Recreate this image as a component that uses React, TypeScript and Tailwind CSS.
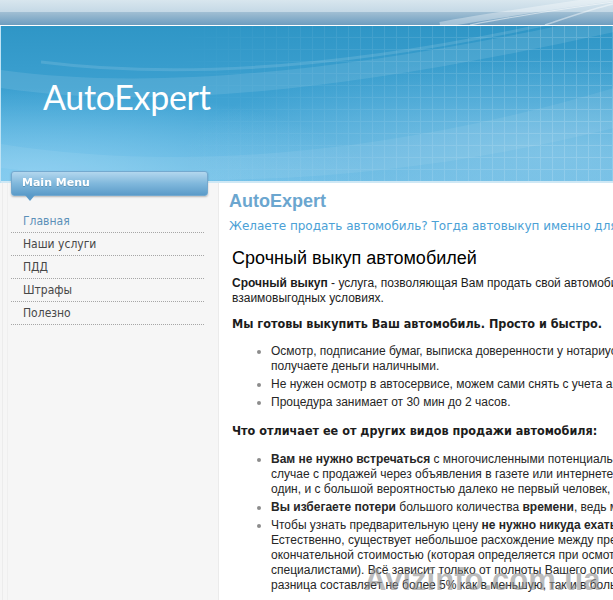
import React from "react";

const menu = ["Главная", "Наши услуги", "ПДД", "Штрафы", "Полезно"];

function Bullet({ lines }: { lines: React.ReactNode[] }) {
  return (
    <li className="relative mb-[3px]">
      <span className="absolute left-[-14px] top-[6px] w-[4px] h-[4px] rounded-full bg-[#8c8c8c]" />
      {lines.map((l, i) => (
        <div key={i} className="whitespace-nowrap">
          {l}
        </div>
      ))}
    </li>
  );
}

export default function App() {
  return (
    <div className="relative w-[613px] h-[600px] overflow-hidden bg-white flex flex-col font-['Liberation_Sans',Arial,sans-serif]">
      {/* top bar */}
      <div className="relative h-[25px] shrink-0">
        <svg className="absolute inset-0" width="613" height="25" viewBox="0 0 613 25">
          <defs>
            <linearGradient id="tb" x1="0" y1="0" x2="0" y2="1">
              <stop offset="0" stopColor="#d8e6ee" />
              <stop offset="0.46" stopColor="#c5d9e6" />
              <stop offset="0.5" stopColor="#9fbed3" />
              <stop offset="1" stopColor="#6e9dbf" />
            </linearGradient>
          </defs>
          <rect width="613" height="25" fill="url(#tb)" />
          <path d="M440 25 C 500 14, 560 6, 613 -2" stroke="#ffffff" strokeOpacity="0.35" strokeWidth="6" fill="none" />
          <path d="M470 25 C 520 15, 570 8, 613 2" stroke="#ffffff" strokeOpacity="0.5" strokeWidth="1.2" fill="none" />
          <path d="M545 25 C 575 15, 595 8, 613 4" stroke="#ffffff" strokeOpacity="0.45" strokeWidth="1.5" fill="none" />
        </svg>
      </div>
      <div className="h-[1px] shrink-0 bg-white" />
      {/* header */}
      <header className="relative h-[157px] shrink-0 border-l border-[#bfe3f5]">
        <svg className="absolute inset-0" width="613" height="157" viewBox="0 0 613 157">
          <defs>
            <linearGradient id="hg" x1="0" y1="0" x2="0" y2="1">
              <stop offset="0" stopColor="#2f96c6" />
              <stop offset="0.5" stopColor="#40a3d3" />
              <stop offset="1" stopColor="#66b9e3" />
            </linearGradient>
            <radialGradient id="hl" cx="0.05" cy="0.95" r="0.55">
              <stop offset="0" stopColor="#96d6f6" stopOpacity="0.7" />
              <stop offset="1" stopColor="#96d6f6" stopOpacity="0" />
            </radialGradient>
            <radialGradient id="hr" cx="0.9" cy="0.8" r="0.6">
              <stop offset="0" stopColor="#9fd3ee" stopOpacity="0.55" />
              <stop offset="1" stopColor="#9fd3ee" stopOpacity="0" />
            </radialGradient>
            <pattern id="grid" width="12" height="12" patternUnits="userSpaceOnUse">
              <path d="M11.5 0V12M0 11.5H12" stroke="#ffffff" strokeWidth="1" fill="none" />
            </pattern>
            <linearGradient id="gm" x1="0" x2="1" y1="0" y2="0">
              <stop offset="0.28" stopColor="#fff" stopOpacity="0" />
              <stop offset="0.75" stopColor="#fff" stopOpacity="0.7" />
              <stop offset="1" stopColor="#fff" stopOpacity="1" />
            </linearGradient>
            <mask id="gmask">
              <rect width="613" height="157" fill="url(#gm)" />
            </mask>
          </defs>
          <rect width="613" height="157" fill="url(#hg)" />
          <rect width="613" height="157" fill="url(#hl)" />
          <rect width="613" height="157" fill="url(#hr)" />
          <path d="M0 44 C 160 66, 360 44, 613 -12 L613 6 C 360 62, 160 86, 0 62 Z" fill="#ffffff" fillOpacity="0.1" />
          <path d="M40 36 C 200 56, 380 36, 560 -5" stroke="#ffffff" strokeOpacity="0.12" strokeWidth="3" fill="none" />
          <path d="M0 118 C 200 150, 420 120, 613 62 L613 102 C 420 150, 220 168, 0 142 Z" fill="#ffffff" fillOpacity="0.07" />
          <rect width="613" height="157" fill="url(#grid)" mask="url(#gmask)" opacity="0.17" />
        </svg>
        <div className="relative pl-[42px] pt-[50px] text-white text-[34px] leading-[42px] font-['Lato',sans-serif] tracking-[-0.3px]">
          AutoExpert
        </div>
        <div className="absolute left-0 right-0 bottom-0 h-[2px] bg-[#cfe8f5]" />
      </header>
      {/* body */}
      <div className="flex flex-1 min-h-0">
        <aside className="relative w-[219px] shrink-0 bg-[#f6f6f6] border-r border-[#ebebeb]">
          <div className="absolute left-[2px] top-0 bottom-0 w-[1px] bg-[#ececec]" />
          <div className="absolute left-[7px] top-0 bottom-0 w-[1px] bg-[#efefef]" />
          <div className="relative z-10 -mt-[12px] ml-[11px] w-[197px] h-[25px] rounded-[3px] bg-gradient-to-b from-[#b3d7ee] via-[#80b8dc] to-[#5b9bc9] border border-[#74a9cf] shadow-[0_1px_2px_rgba(0,0,0,0.25)] flex items-center pl-[10px]">
            <span className="text-white text-[11px] font-bold font-['DejaVu_Sans',sans-serif] drop-shadow-[0_1px_0_rgba(0,0,0,0.15)]">
              Main Menu
            </span>
            <span className="absolute left-[13px] top-full w-0 h-0 border-l-[5px] border-r-[5px] border-t-[6px] border-l-transparent border-r-transparent border-t-[#5b9bc9]" />
          </div>
          <ul className="relative mt-[14px] ml-[11px] w-[193px] font-['DejaVu_Sans_Condensed','DejaVu_Sans',sans-serif] text-[12px]">
            {menu.map((m, i) => (
              <li
                key={m}
                className={
                  "h-[23px] leading-[22px] pl-[12px] border-b border-dotted border-[#a6a6a6] " +
                  (i === 0 ? "text-[#5b90b8]" : "text-[#474747]")
                }
              >
                {m}
              </li>
            ))}
          </ul>
        </aside>
        <main className="flex-1 pl-[10px] pt-[7px] text-[12px] leading-[15px] text-[#1c1c1c]">
          <h1 className="text-[18px] leading-[22px] font-bold text-[#6ba6cf] whitespace-nowrap">AutoExpert</h1>
          <p className="mt-[6px] leading-[16px] text-[12px] text-[#4ba1d6] whitespace-nowrap font-['DejaVu_Sans',sans-serif]">
            Желаете продать автомобиль? Тогда автовыкуп именно для Вас!
          </p>
          <div className="pl-[3px]">
            <h2 className="mt-[13px] text-[18px] leading-[22px] text-black whitespace-nowrap">Срочный выкуп автомобилей</h2>
            <p className="mt-[7px] whitespace-nowrap">
              <b>Срочный выкуп</b> - услуга, позволяющая Вам продать свой автомобиль в кратчайшие сроки и на
              <br />
              взаимовыгодных условиях.
            </p>
            <h3 className="mt-[9px] text-[12.5px] leading-[17px] font-bold whitespace-nowrap font-['DejaVu_Sans_Condensed','DejaVu_Sans',sans-serif]">
              Мы готовы выкупить Ваш автомобиль. Просто и быстро.
            </h3>
            <ul className="mt-[12px] pl-[39px] text-[#262626]">
              <Bullet
                lines={[
                  "Осмотр, подписание бумаг, выписка доверенности у нотариуса — и Вы сразу",
                  "получаете деньги наличными.",
                ]}
              />
              <Bullet lines={["Не нужен осмотр в автосервисе, можем сами снять с учета автомобиль."]} />
              <Bullet lines={["Процедура занимает от 30 мин до 2 часов."]} />
            </ul>
            <h3 className="mt-[12px] text-[12.5px] leading-[17px] font-bold whitespace-nowrap font-['DejaVu_Sans_Condensed','DejaVu_Sans',sans-serif]">
              Что отличает ее от других видов продажи автомобиля:
            </h3>
            <ul className="mt-[13px] pl-[39px] text-[#262626]">
              <Bullet
                lines={[
                  <>
                    <b>Вам не нужно встречаться</b> с многочисленными потенциальными покупателями, как в
                  </>,
                  "случае с продажей через объявления в газете или интернете, каждый из которых не",
                  "один, и с большой вероятностью далеко не первый человек, который осматривает.",
                ]}
              />
              <Bullet
                lines={[
                  <>
                    <b>Вы избегаете потери</b> большого количества <b>времени</b>, ведь мы работаем быстро.
                  </>,
                ]}
              />
              <Bullet
                lines={[
                  <>
                    Чтобы узнать предварительную цену <b>не нужно никуда ехать</b>, достаточно позвонить.
                  </>,
                  "Естественно, существует небольшое расхождение между предварительной и",
                  "окончательной стоимостью (которая определяется при осмотре автомобиля нашими",
                  "специалистами). Всё зависит только от полноты Вашего описания, но как правило",
                  "разница составляет не более 5% как в меньшую, так и в большую сторону.",
                ]}
              />
            </ul>
          </div>
        </main>
      </div>
      <div className="absolute left-[364px] top-[562px] text-[31px] leading-[36px] font-bold text-[#8f8f8f]/60 whitespace-nowrap pointer-events-none">
        Avizinfo.com.ua
      </div>
    </div>
  );
}
